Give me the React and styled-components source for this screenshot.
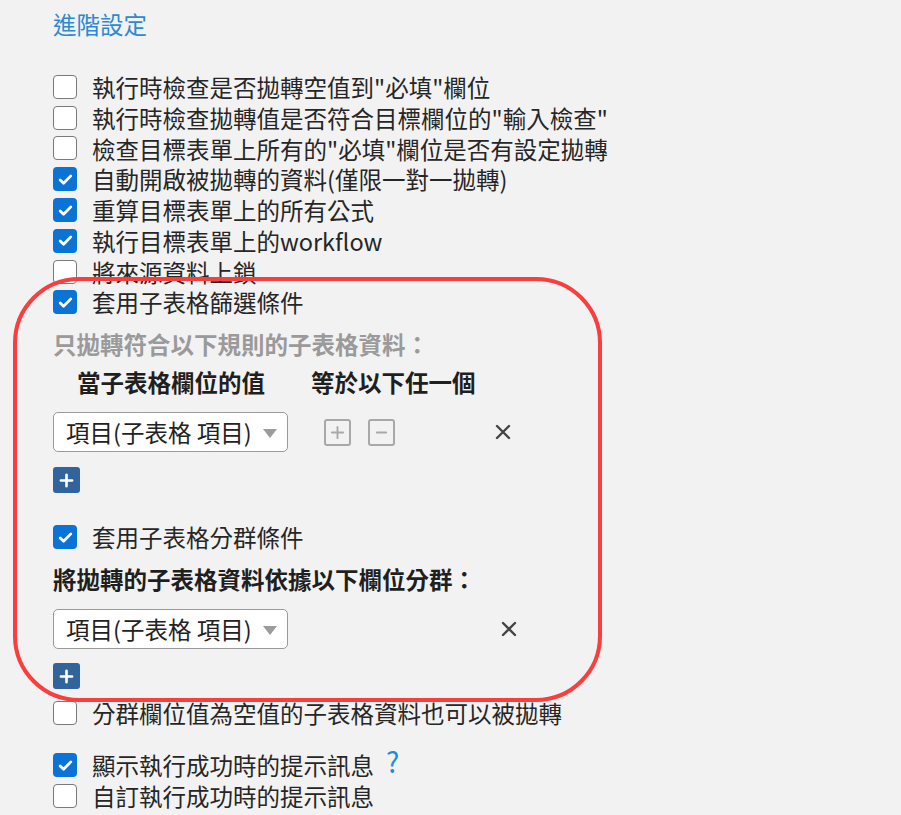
import React from "react"
import styled, { createGlobalStyle } from "styled-components"

const GlobalStyle = createGlobalStyle`
  html, body {
    margin: 0;
    padding: 0;
    background: #f2f2f2;
  }
  body {
    font-family: "Noto Sans CJK TC", "Noto Sans", sans-serif;
    color: #262626;
  }
`

const Page = styled.div`
  position: relative;
  width: 901px;
  height: 815px;
  overflow: hidden;
  padding-left: 53px;
  box-sizing: border-box;
`

const Heading = styled.div`
  margin-top: 9px;
  font-size: 23.5px;
  line-height: 31px;
  color: #2b8ad3;
`

const List = styled.div`
  display: flex;
  flex-direction: column;
  margin-top: ${props => props.top || 0}px;
`

const Row = styled.label`
  display: flex;
  align-items: center;
  height: 30.8px;
  gap: 15px;
  font-size: 23.5px;
  white-space: nowrap;
  margin-top: ${props => props.top || 0}px;
`

const Box = styled.span`
  flex: none;
  width: 24px;
  height: 24px;
  box-sizing: border-box;
  border-radius: 4px;
  display: flex;
  align-items: center;
  justify-content: center;
  background: ${props => (props.checked ? "#0b73d6" : "#fff")};
  border: ${props => (props.checked ? "none" : "1.5px solid #7a7a7a")};
`

const Label = styled.div`
  font-size: 23.5px;
  line-height: 31px;
  font-weight: 700;
  white-space: nowrap;
  color: ${props => (props.muted ? "#9a9a9a" : "#1f1f1f")};
  margin-top: ${props => props.top || 0}px;
`

const ColumnHeads = styled.div`
  display: grid;
  grid-template-columns: 234px auto;
  padding-left: 24px;
  margin-top: 7px;
  font-size: 23.5px;
  line-height: 31px;
  font-weight: 700;
  color: #1f1f1f;
`

const FieldRow = styled.div`
  display: flex;
  align-items: center;
  height: 40px;
  margin-top: ${props => props.top || 0}px;
`

const Select = styled.div`
  flex: none;
  width: 235px;
  height: 40px;
  box-sizing: border-box;
  border: 1px solid #9a9a9a;
  border-radius: 5px;
  background: #fff;
  display: flex;
  align-items: center;
  justify-content: space-between;
  padding: 0 10px 0 12px;
  font-size: 23.5px;
  color: #222;
  white-space: nowrap;
`

const Caret = styled.span`
  width: 0;
  height: 0;
  border-left: 7px solid transparent;
  border-right: 7px solid transparent;
  border-top: 9px solid #9c9c9c;
  margin-top: 2px;
`

const ValueTools = styled.div`
  display: flex;
  gap: 17px;
  margin-left: 36px;
`

const OutlineBtn = styled.span`
  width: 27px;
  height: 27px;
  box-sizing: border-box;
  border: 2px solid #a8a8a8;
  border-radius: 3px;
  display: flex;
  align-items: center;
  justify-content: center;
`

const Remove = styled.span`
  display: flex;
  margin-left: ${props => props.offset}px;
`

const AddBtn = styled.span`
  width: 27px;
  height: 26px;
  border-radius: 3px;
  background: #31649c;
  display: flex;
  align-items: center;
  justify-content: center;
  margin-top: ${props => props.top || 0}px;
`

const Help = styled.span`
  color: #1b8fdc;
  font-size: 28px;
  line-height: 1;
  margin-left: -3px;
  margin-top: -8px;
`

const Annotation = styled.div`
  position: absolute;
  left: 13px;
  top: 277px;
  width: 589px;
  height: 425px;
  box-sizing: border-box;
  border: 4.5px solid #f93e3e;
  border-radius: 66px;
  pointer-events: none;
`

const Check = () => (
  <svg width="17" height="17" viewBox="0 0 16 16">
    <path d="M3 8.4l3.2 3.2L13 4.6" fill="none" stroke="#fff" strokeWidth="2.6" strokeLinecap="round" strokeLinejoin="round" />
  </svg>
)

const CheckRow = ({ checked, children, top }) => (
  <Row top={top}>
    <Box checked={checked}>{checked && <Check />}</Box>
    {children}
  </Row>
)

const Cross = () => (
  <svg width="16" height="16" viewBox="0 0 16 16">
    <path d="M2 2l12 12M14 2L2 14" stroke="#444" strokeWidth="2.4" strokeLinecap="round" />
  </svg>
)

const PlusGlyph = ({ color, size = 15, width = 2.4 }) => (
  <svg width={size} height={size} viewBox="0 0 16 16">
    <path d="M8 2v12M2 8h12" stroke={color} strokeWidth={width} strokeLinecap="round" />
  </svg>
)

const MinusGlyph = () => (
  <svg width="15" height="15" viewBox="0 0 16 16">
    <path d="M3 8h10" stroke="#a8a8a8" strokeWidth="2" strokeLinecap="round" />
  </svg>
)

const options = [
  { text: '執行時檢查是否拋轉空值到"必填"欄位', checked: false },
  { text: '執行時檢查拋轉值是否符合目標欄位的"輸入檢查"', checked: false },
  { text: '檢查目標表單上所有的"必填"欄位是否有設定拋轉', checked: false },
  { text: "自動開啟被拋轉的資料(僅限一對一拋轉)", checked: true },
  { text: "重算目標表單上的所有公式", checked: true },
  { text: "執行目標表單上的workflow", checked: true },
  { text: "將來源資料上鎖", checked: false },
  { text: "套用子表格篩選條件", checked: true },
]

export default function App() {
  return (
    <Page>
      <GlobalStyle />
      <Heading>進階設定</Heading>

      <List top={31.5}>
        {options.map(o => (
          <CheckRow key={o.text} checked={o.checked}>
            {o.text}
          </CheckRow>
        ))}
      </List>

      <Label muted top={11}>只拋轉符合以下規則的子表格資料：</Label>
      <ColumnHeads>
        <span>當子表格欄位的值</span>
        <span>等於以下任一個</span>
      </ColumnHeads>
      <FieldRow top={14.6}>
        <Select>
          項目(子表格 項目)
          <Caret />
        </Select>
        <ValueTools>
          <OutlineBtn>
            <PlusGlyph color="#a8a8a8" size={15} width={2} />
          </OutlineBtn>
          <OutlineBtn>
            <MinusGlyph />
          </OutlineBtn>
        </ValueTools>
        <Remove offset={100}>
          <Cross />
        </Remove>
      </FieldRow>
      <AddBtn top={15}>
        <PlusGlyph color="#fff" size={15} width={2.8} />
      </AddBtn>

      <CheckRow checked top={28.6}>套用子表格分群條件</CheckRow>
      <Label top={11}>將拋轉的子表格資料依據以下欄位分群：</Label>
      <FieldRow top={14.5}>
        <Select>
          項目(子表格 項目)
          <Caret />
        </Select>
        <Remove offset={213}>
          <Cross />
        </Remove>
      </FieldRow>
      <AddBtn top={14}>
        <PlusGlyph color="#fff" size={15} width={2.8} />
      </AddBtn>

      <CheckRow top={8.6}>分群欄位值為空值的子表格資料也可以被拋轉</CheckRow>
      <CheckRow checked top={21}>
        顯示執行成功時的提示訊息
        <Help>?</Help>
      </CheckRow>
      <CheckRow>自訂執行成功時的提示訊息</CheckRow>

      <Annotation />
    </Page>
  )
}
